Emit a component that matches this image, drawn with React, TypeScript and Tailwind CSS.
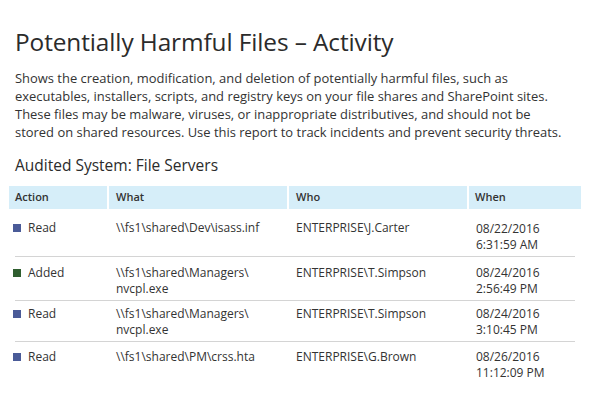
import React from "react";

type Row = {
  action: string;
  color: string;
  what: string[];
  who: string;
  date: string;
  time: string;
  pad: string;
  border: boolean;
};

const rows: Row[] = [
  { action: "Read", color: "bg-[#4a5b98]", what: ["\\\\fs1\\shared\\Dev\\isass.inf"], who: "ENTERPRISE\\J.Carter", date: "08/22/2016", time: "6:31:59 AM", pad: "pt-[11px] pb-[3px]", border: true },
  { action: "Added", color: "bg-[#2f5e2f]", what: ["\\\\fs1\\shared\\Managers\\", "nvcpl.exe"], who: "ENTERPRISE\\T.Simpson", date: "08/24/2016", time: "2:56:49 PM", pad: "pt-[8px] pb-[3px]", border: true },
  { action: "Read", color: "bg-[#4a5b98]", what: ["\\\\fs1\\shared\\Managers\\", "nvcpl.exe"], who: "ENTERPRISE\\T.Simpson", date: "08/24/2016", time: "3:10:45 PM", pad: "pt-[5px] pb-[3px]", border: true },
  { action: "Read", color: "bg-[#4a5b98]", what: ["\\\\fs1\\shared\\PM\\crss.hta"], who: "ENTERPRISE\\G.Brown", date: "08/26/2016", time: "11:12:09 PM", pad: "pt-[7px] pb-[4px]", border: false },
];

export default function App() {
  return (
    <div
      className="w-[590px] h-[395px] bg-white text-[#333333] overflow-hidden"
      style={{ fontFamily: '"Open Sans", "Noto Sans", sans-serif' }}
    >
      <div className="pl-[15px] pt-[26px]">
        <h1 className="text-[24.4px] leading-[32px] font-normal text-[#2b2b2b] tracking-[-0.1px]">
          Potentially Harmful Files – Activity
        </h1>
        <p className="mt-[11px] text-[12.95px] leading-[18px] text-[#333333] w-[575px]">
          Shows the creation, modification, and deletion of potentially harmful files, such as
          <br />
          executables, installers, scripts, and registry keys on your file shares and SharePoint sites.
          <br />
          These files may be malware, viruses, or inappropriate distributives, and should not be
          <br />
          stored on shared resources. Use this report to track incidents and prevent security threats.
        </p>
        <h2 className="mt-[14px] text-[15.5px] leading-[20px] text-[#2b2b2b]">Audited System: File Servers</h2>
      </div>
      <div className="pl-[9px] mt-[11px]">
        <div className="grid grid-cols-[98px_178px_178px_112px] gap-x-[2px] text-[11px] font-semibold text-[#333333]">
          <div className="bg-[#d6eef9] h-[23px] flex items-center pl-[6px]">Action</div>
          <div className="bg-[#d6eef9] h-[23px] flex items-center pl-[7px]">What</div>
          <div className="bg-[#d6eef9] h-[23px] flex items-center pl-[7px]">Who</div>
          <div className="bg-[#d6eef9] h-[23px] flex items-center pl-[6px]">When</div>
        </div>
        {rows.map((r, i) => (
          <div key={i} className="relative">
            <div className={`grid grid-cols-[98px_178px_178px_112px] gap-x-[2px] text-[12px] leading-[16px] text-[#333333] ${r.pad}`}>
              <div className="flex items-start pl-[4px]">
                <span className={`mt-[4px] w-[8px] h-[8px] shrink-0 ${r.color}`} />
                <span className="ml-[7px]">{r.action}</span>
              </div>
              <div className="pl-[7px]">
                {r.what.map((w, j) => (
                  <div key={j}>{w}</div>
                ))}
              </div>
              <div className="pl-[7px]">{r.who}</div>
              <div className={`pl-[7px] ${i === 0 ? "pt-[1px]" : ""}`}>
                <div>{r.date}</div>
                <div>{r.time}</div>
              </div>
            </div>
            {r.border && <div className="ml-[6px] w-[560px] h-px bg-[#d4d4d4]" />}
          </div>
        ))}
      </div>
    </div>
  );
}
